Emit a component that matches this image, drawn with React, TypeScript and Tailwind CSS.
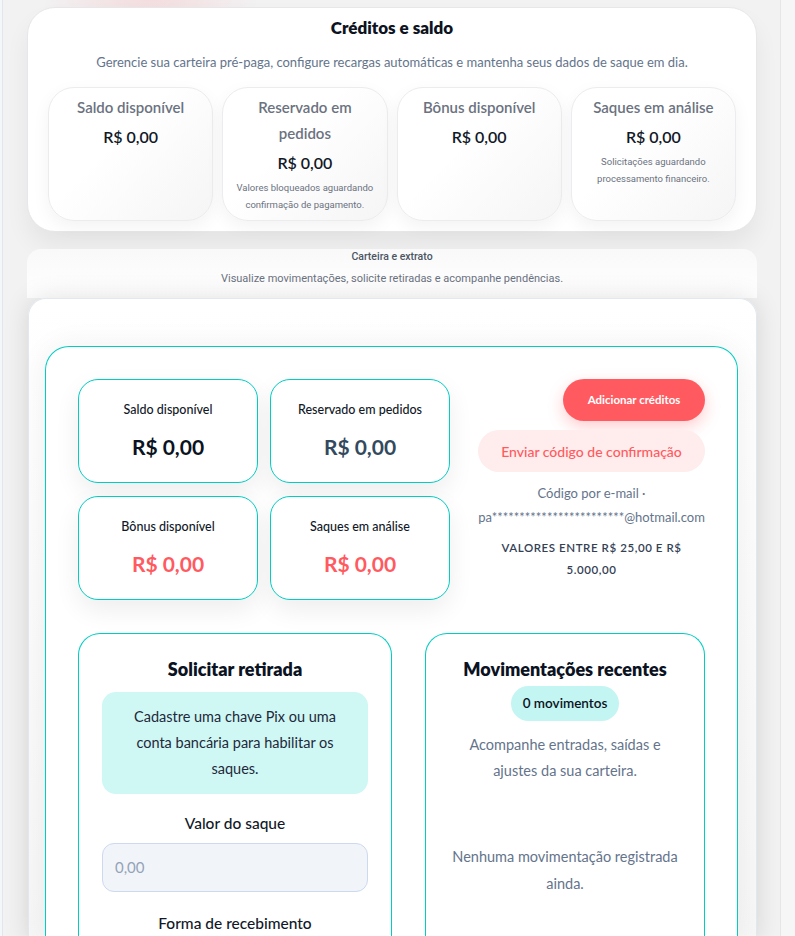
import React from 'react';

const lato = "font-['Lato',sans-serif]";

const topStats = [
  { label: 'Saldo disponível', value: 'R$ 0,00' },
  {
    label: 'Reservado em pedidos',
    value: 'R$ 0,00',
    note: 'Valores bloqueados aguardando confirmação de pagamento.',
  },
  { label: 'Bônus disponível', value: 'R$ 0,00' },
  {
    label: 'Saques em análise',
    value: 'R$ 0,00',
    note: 'Solicitações aguardando processamento financeiro.',
  },
];

const walletStats = [
  { label: 'Saldo disponível', value: 'R$ 0,00', tone: 'text-[#0b1222]' },
  { label: 'Reservado em pedidos', value: 'R$ 0,00', tone: 'text-[#334a5e]' },
  { label: 'Bônus disponível', value: 'R$ 0,00', tone: 'text-[#ff5a5f]' },
  { label: 'Saques em análise', value: 'R$ 0,00', tone: 'text-[#ff5a5f]' },
];

function TopStat({ label, value, note }: { label: string; value: string; note?: string }) {
  return (
    <div className="flex flex-col items-center rounded-[26px] border border-[#ececee] bg-[linear-gradient(135deg,#ffffff_40%,#f5f5f6)] px-2 pt-[6px] text-center shadow-[0_6px_18px_rgba(0,0,0,0.05)]">
      <p className="px-2 text-[15px] font-semibold leading-[26px] text-[#6b7280]">{label}</p>
      <p className="mt-1 text-[16px] font-semibold leading-[26px] text-[#111827]">{value}</p>
      {note && (
        <p className="mt-[3px] font-['Roboto',sans-serif] text-[9.5px] leading-[17px] text-[#6b7280]">{note}</p>
      )}
    </div>
  );
}

function WalletStat({ label, value, tone }: { label: string; value: string; tone: string }) {
  return (
    <div className="flex h-[104px] flex-col items-center justify-center gap-[15px] rounded-[20px] border-[1.5px] border-[#00cdc4] bg-white shadow-[0_10px_26px_rgba(0,0,0,0.07)]">
      <p className="text-[12.5px] font-medium leading-4 text-[#111827]">{label}</p>
      <p className={`text-[21px] font-bold leading-7 ${tone}`}>{value}</p>
    </div>
  );
}

export default function App() {
  return (
    <div className={`${lato} flex h-[936px] overflow-hidden bg-[#f2f2f3] bg-[radial-gradient(circle_at_150px_-20px,rgba(255,90,95,0.16),transparent_110px)]`}>
      <div className="w-[3px] shrink-0 border-r border-[#e1e6ee] bg-[#f4f7fa]" />

      <main className="ml-[24px] flex w-[730px] shrink-0 flex-col pt-[7px]">
        <section className="rounded-[28px] border border-[#e7e7e9] bg-white px-[20px] pt-[8px] pb-[10px] shadow-[0_14px_24px_rgba(0,0,0,0.06)]">
          <h1 className="text-center text-[17px] font-extrabold leading-6 text-[#0d1321]">Créditos e saldo</h1>
          <p className="mt-3 text-center text-[13px] leading-5 text-[#64748b]">
            Gerencie sua carteira pré-paga, configure recargas automáticas e mantenha seus dados de saque em dia.
          </p>
          <div className="mt-[15px] grid h-[134px] grid-cols-4 gap-[9px]">
            {topStats.map((s) => (
              <TopStat key={s.label} {...s} />
            ))}
          </div>
        </section>

        <div className="mt-[17px] rounded-t-[14px] bg-[linear-gradient(180deg,#f9f9fa,#ffffff)] pb-[11px] text-center font-['Roboto',sans-serif]">
          <p className="text-[10.5px] font-medium leading-4 text-[#4b5563]">Carteira e extrato</p>
          <p className="mt-[6px] text-[11px] leading-4 text-[#6b7280]">
            Visualize movimentações, solicite retiradas e acompanhe pendências.
          </p>
        </div>

        <section className="ml-px flex-1 rounded-t-[18px] border border-b-0 border-[#e3e8ef] bg-[linear-gradient(180deg,#ffffff,#f6f6f7)] pt-[47px] pl-4 pr-[18px] shadow-[0_0_26px_rgba(0,0,0,0.12)]">
          <div className="rounded-t-[24px] border-[1.5px] border-b-0 border-[#00cdc4] bg-white px-8 pt-8 shadow-[0_0_30px_rgba(0,0,0,0.06)]">
            <div className="grid grid-cols-[372px_1fr] gap-x-[28px]">
              <div className="grid grid-cols-2 gap-x-3 gap-y-[13px]">
                {walletStats.map((s) => (
                  <WalletStat key={s.label} {...s} />
                ))}
              </div>

              <div className="flex flex-col items-stretch text-center">
                <button className="self-end h-[42px] w-[142px] rounded-full bg-[#ff5a5f] text-[11.5px] font-bold text-white shadow-[0_6px_16px_rgba(255,90,95,0.3)]">
                  Adicionar créditos
                </button>
                <button className="mt-[9px] h-[42px] w-full rounded-full bg-[#ffecec] text-[14px] font-medium text-[#ff5a5f]">
                  Enviar código de confirmação
                </button>
                <p className="mt-[9px] text-[13px] leading-6 text-[#64748b]">
                  Código por e-mail ·
                  <br />
                  pa************************@hotmail.com
                </p>
                <p className="mt-2 text-[11.5px] font-semibold uppercase leading-[22px] tracking-[0.05em] text-[#334155]">
                  Valores entre R$ 25,00 e R$ 5.000,00
                </p>
              </div>
            </div>

            <div className="mt-[33px] grid grid-cols-[314px_1fr] gap-x-[33px]">
              <div className="h-[310px] rounded-t-[22px] border-[1.5px] border-b-0 border-[#00cdc4] bg-white px-[23px] pt-[23px] text-center">
                <h2 className="text-[18px] font-extrabold leading-6 text-[#0b1222]">Solicitar retirada</h2>
                <div className="mt-[11px] rounded-[14px] bg-[#cff7f4] px-6 py-3 text-[14.5px] leading-[26px] text-[#1e293b]">
                  Cadastre uma chave Pix ou uma conta bancária para habilitar os saques.
                </div>
                <p className="mt-[19px] text-[15.5px] font-medium leading-5 text-[#111827]">Valor do saque</p>
                <div className="mt-[10px] flex h-[49px] items-center rounded-[12px] border border-[#cdd9ef] bg-[#f1f5f9] px-3 text-[15px] text-[#94a3b8]">
                  0,00
                </div>
                <p className="mt-[21px] text-[15.5px] font-medium leading-5 text-[#111827]">Forma de recebimento</p>
              </div>

              <div className="flex h-[310px] flex-col items-center rounded-t-[22px] border-[1.5px] border-b-0 border-[#00cdc4] bg-white px-[22px] pt-[23px] text-center">
                <h2 className="text-[18px] font-extrabold leading-6 text-[#0b1222]">Movimentações recentes</h2>
                <span className="mt-[5px] flex h-[35px] items-center rounded-full bg-[#c3f5f2] px-[12px] text-[13.5px] font-semibold text-[#0b1222]">
                  0 movimentos
                </span>
                <p className="mt-[11px] text-[14.5px] leading-[26px] text-[#64748b]">
                  Acompanhe entradas, saídas e ajustes da sua carteira.
                </p>
                <p className="mt-[59px] text-[14.5px] leading-[27px] text-[#64748b]">
                  Nenhuma movimentação registrada ainda.
                </p>
              </div>
            </div>
          </div>
        </section>
      </main>

      <div className="ml-[23px] w-[15px] shrink-0 border-l border-[#e6e6e8] bg-[#f6f6f7]" />
    </div>
  );
}
